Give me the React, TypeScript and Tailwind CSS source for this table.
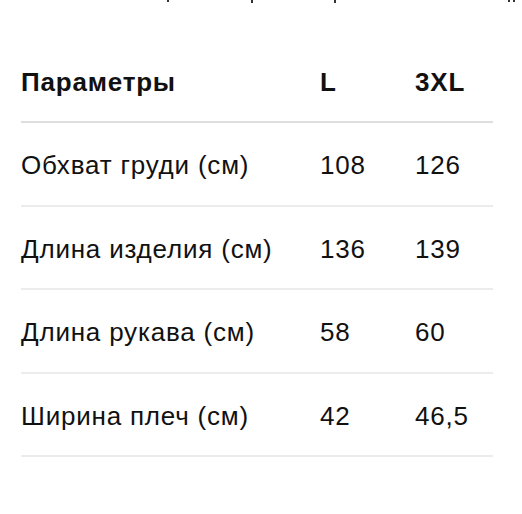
const rows = [
  { name: "Обхват груди (см)", l: "108", xl: "126" },
  { name: "Длина изделия (см)", l: "136", xl: "139" },
  { name: "Длина рукава (см)", l: "58", xl: "60" },
  { name: "Ширина плеч (см)", l: "42", xl: "46,5" },
];

const App = () => {
  return (
    <div className="min-h-screen bg-white text-[#111] font-['Liberation_Sans',Arial,sans-serif]">
      {/* descenders of the line cut off above */}
      <div className="flex h-[3px] items-start">
        <span className="ml-[167px] h-[2px] w-[2px] bg-[#333]" />
        <span className="ml-[82px] h-[3px] w-[2px] bg-[#333]" />
        <span className="ml-[81px] h-[3px] w-[2px] bg-[#333]" />
        <span className="ml-[172px] h-[2px] w-[2px] bg-[#333]" />
        <span className="ml-[3px] h-[2px] w-[2px] bg-[#333]" />
      </div>
      <div className="ml-[21px] w-[472px]">
        <div className="grid grid-cols-[299px_95px_78px] border-b-2 border-[#dedede] pt-[62px] pb-[22px] text-[26px] font-bold leading-[34px] tracking-[0.8px]">
          <div>Параметры</div>
          <div>L</div>
          <div>3XL</div>
        </div>
        {rows.map((r) => (
          <div
            key={r.name}
            className="grid grid-cols-[299px_95px_78px] border-b-2 border-[#ececec] pt-[25px] pb-[22.5px] text-[26px] leading-[34px] tracking-[0.8px]"
          >
            <div>{r.name}</div>
            <div>{r.l}</div>
            <div>{r.xl}</div>
          </div>
        ))}
      </div>
    </div>
  );
};

export default App;
